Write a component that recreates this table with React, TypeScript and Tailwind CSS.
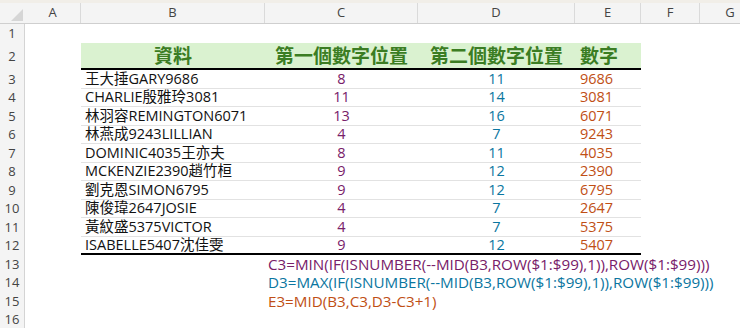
import React from "react";

const rows: [string, number, number, string][] = [
  ["王大捶GARY9686", 8, 11, "9686"],
  ["CHARLIE殷雅玲3081", 11, 14, "3081"],
  ["林羽容REMINGTON6071", 13, 16, "6071"],
  ["林燕成9243LILLIAN", 4, 7, "9243"],
  ["DOMINIC4035王亦夫", 8, 11, "4035"],
  ["MCKENZIE2390趙竹桓", 9, 12, "2390"],
  ["劉克恩SIMON6795", 9, 12, "6795"],
  ["陳俊瑋2647JOSIE", 4, 7, "2647"],
  ["黃紋盛5375VICTOR", 4, 7, "5375"],
  ["ISABELLE5407沈佳雯", 9, 12, "5407"],
];

const font = { fontFamily: '"Open Sans", "Noto Sans CJK TC", sans-serif' };

function RowHead({ n }: { n: number }) {
  return (
    <div className="w-[25px] shrink-0 h-full bg-[#f4f4f4] border-r border-[#d4d4d4] flex items-center justify-center text-[13px] text-[#444]">
      {n}
    </div>
  );
}

export default function App() {
  return (
    <div className="w-[740px] h-[328px] bg-white overflow-hidden" style={font}>
      {/* top strip */}
      <div className="h-[3px] bg-[#f1eee8]" />
      {/* column header */}
      <div className="flex h-[21px] bg-[#f4f4f4] border-b border-[#cfcfcf] text-[13px] text-[#444]">
        <div className="w-[25px] shrink-0 relative">
          <svg className="absolute left-[11px] top-[6px]" width="12" height="12" viewBox="0 0 12 12">
            <polygon points="12,0 12,12 0,12" fill="#d6d6d6" />
          </svg>
        </div>
        <div className="w-[56px] shrink-0 flex items-center justify-center border-r border-[#dadada]">A</div>
        <div className="w-[184px] shrink-0 flex items-center justify-center border-r border-[#dadada]">B</div>
        <div className="w-[153px] shrink-0 flex items-center justify-center border-r border-[#dadada]">C</div>
        <div className="w-[157px] shrink-0 flex items-center justify-center border-r border-[#dadada]">D</div>
        <div className="w-[66px] shrink-0 flex items-center justify-center border-r border-[#dadada]">E</div>
        <div className="w-[59px] shrink-0 flex items-center justify-center border-r border-[#dadada]">F</div>
        <div className="w-[60px] shrink-0 flex items-center justify-center">G</div>
      </div>
      {/* row 1 */}
      <div className="flex h-[19px]">
        <RowHead n={1} />
      </div>
      {/* row 2 header */}
      <div className="flex h-[27px]">
        <RowHead n={2} />
        <div className="w-[56px] shrink-0" />
        <div
          className="flex h-full bg-[#daf2d0] border-b-2 border-black text-[19px] font-bold text-[#3b7d23]"
          style={{ fontFamily: '"Noto Sans CJK TC", sans-serif' }}
        >
          <div className="w-[184px] flex items-center justify-center">資料</div>
          <div className="w-[153px] flex items-center justify-center">第一個數字位置</div>
          <div className="w-[157px] flex items-center justify-center">第二個數字位置</div>
          <div className="w-[66px] flex items-center pl-[5px]">數字</div>
        </div>
      </div>
      {/* data rows */}
      {rows.map((r, i) => (
        <div key={i} className="flex h-[18.5px]">
          <RowHead n={i + 3} />
          <div className="w-[56px] shrink-0" />
          <div
            className={
              "flex h-full text-[14.5px] " +
              (i === rows.length - 1 ? "border-b-2 border-black" : "border-b border-[#e2e2e2]")
            }
          >
            <div className="w-[184px] flex items-center pl-[4px] text-[#111] whitespace-nowrap">{r[0]}</div>
            <div className="w-[153px] flex items-center justify-center text-[#782069]">{r[1]}</div>
            <div className="w-[157px] flex items-center justify-center text-[#0b76a0]">{r[2]}</div>
            <div className="w-[66px] flex items-center pl-[5px] text-[#c04f15]">{r[3]}</div>
          </div>
        </div>
      ))}
      {/* formula rows */}
      {[
        { n: 13, t: "C3=MIN(IF(ISNUMBER(--MID(B3,ROW($1:$99),1)),ROW($1:$99)))", c: "text-[#782069]" },
        { n: 14, t: "D3=MAX(IF(ISNUMBER(--MID(B3,ROW($1:$99),1)),ROW($1:$99)))", c: "text-[#0b76a0]" },
        { n: 15, t: "E3=MID(B3,C3,D3-C3+1)", c: "text-[#c04f15]" },
      ].map((f) => (
        <div key={f.n} className="flex h-[18.5px]">
          <RowHead n={f.n} />
          <div className="w-[243px] shrink-0" />
          <div className={"flex items-center text-[15.2px] whitespace-nowrap " + f.c}>{f.t}</div>
        </div>
      ))}
      <div className="flex h-[19px]">
        <RowHead n={16} />
      </div>
    </div>
  );
}
